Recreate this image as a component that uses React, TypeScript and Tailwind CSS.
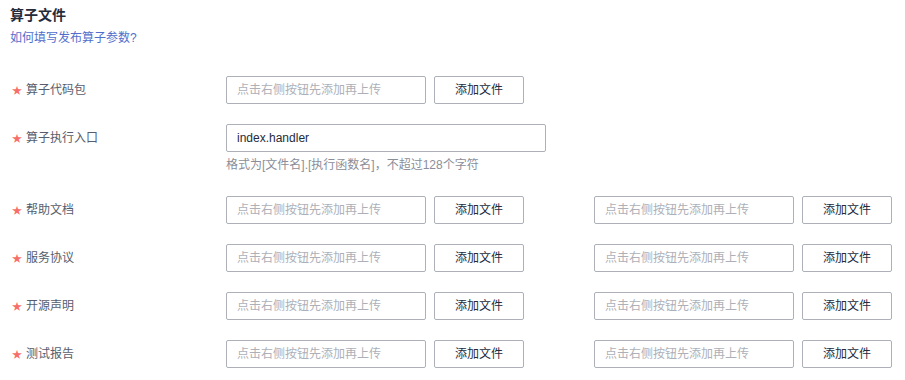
import React from 'react';

const FONT = { fontFamily: '"Liberation Sans", "Noto Sans CJK SC", sans-serif' };

const UploadField: React.FC = () => (
  <div className="flex items-center gap-2">
    <div className="flex h-[28px] w-[200px] items-center rounded-[2px] border border-[#adb0b8] px-[10px] text-[12px] text-[#adb0b8]">
      点击右侧按钮先添加再上传
    </div>
    <button className="h-[28px] w-[90px] rounded-[2px] border border-[#adb0b8] bg-white text-[12px] text-[#252b3a]">
      添加文件
    </button>
  </div>
);

const Label: React.FC<{ text: string }> = ({ text }) => (
  <div className="flex h-[28px] w-[226px] shrink-0 items-center pl-[12px] text-[12px] text-[#575d6c]">
    <span className="mr-[4px] w-[10px] text-[10px] text-[#f66f6a]">★</span>
    {text}
  </div>
);

const docRows = ['帮助文档', '服务协议', '开源声明', '测试报告'];

export default function App() {
  return (
    <div className="h-[380px] w-[905px] bg-white" style={FONT}>
      <div className="px-[10px] pt-[5px]">
        <div className="text-[14px] font-bold leading-[20px] text-[#252b3a]">算子文件</div>
        <a className="mt-[4px] block text-[12px] leading-[18px] text-[#526ecc]" href="#">
          如何填写发布算子参数?
        </a>
      </div>
      <div className="mt-[29px] flex flex-col gap-[20px]">
        <div className="flex">
          <Label text="算子代码包" />
          <UploadField />
        </div>
        <div className="flex">
          <Label text="算子执行入口" />
          <div>
            <div className="flex h-[28px] w-[320px] items-center rounded-[2px] border border-[#adb0b8] px-[10px] text-[12px] text-[#252b3a]">
              index.handler
            </div>
            <div className="mt-[4px] text-[12px] leading-[18px] text-[#8a8e99]">
              格式为[文件名].[执行函数名]，不超过128个字符
            </div>
          </div>
        </div>
        {docRows.map((r, i) => (
          <div key={r} className={i === 0 ? 'mt-[2px] flex' : 'flex'}>
            <Label text={r} />
            <div className="flex gap-[70px]">
              <UploadField />
              <UploadField />
            </div>
          </div>
        ))}
      </div>
    </div>
  );
}
